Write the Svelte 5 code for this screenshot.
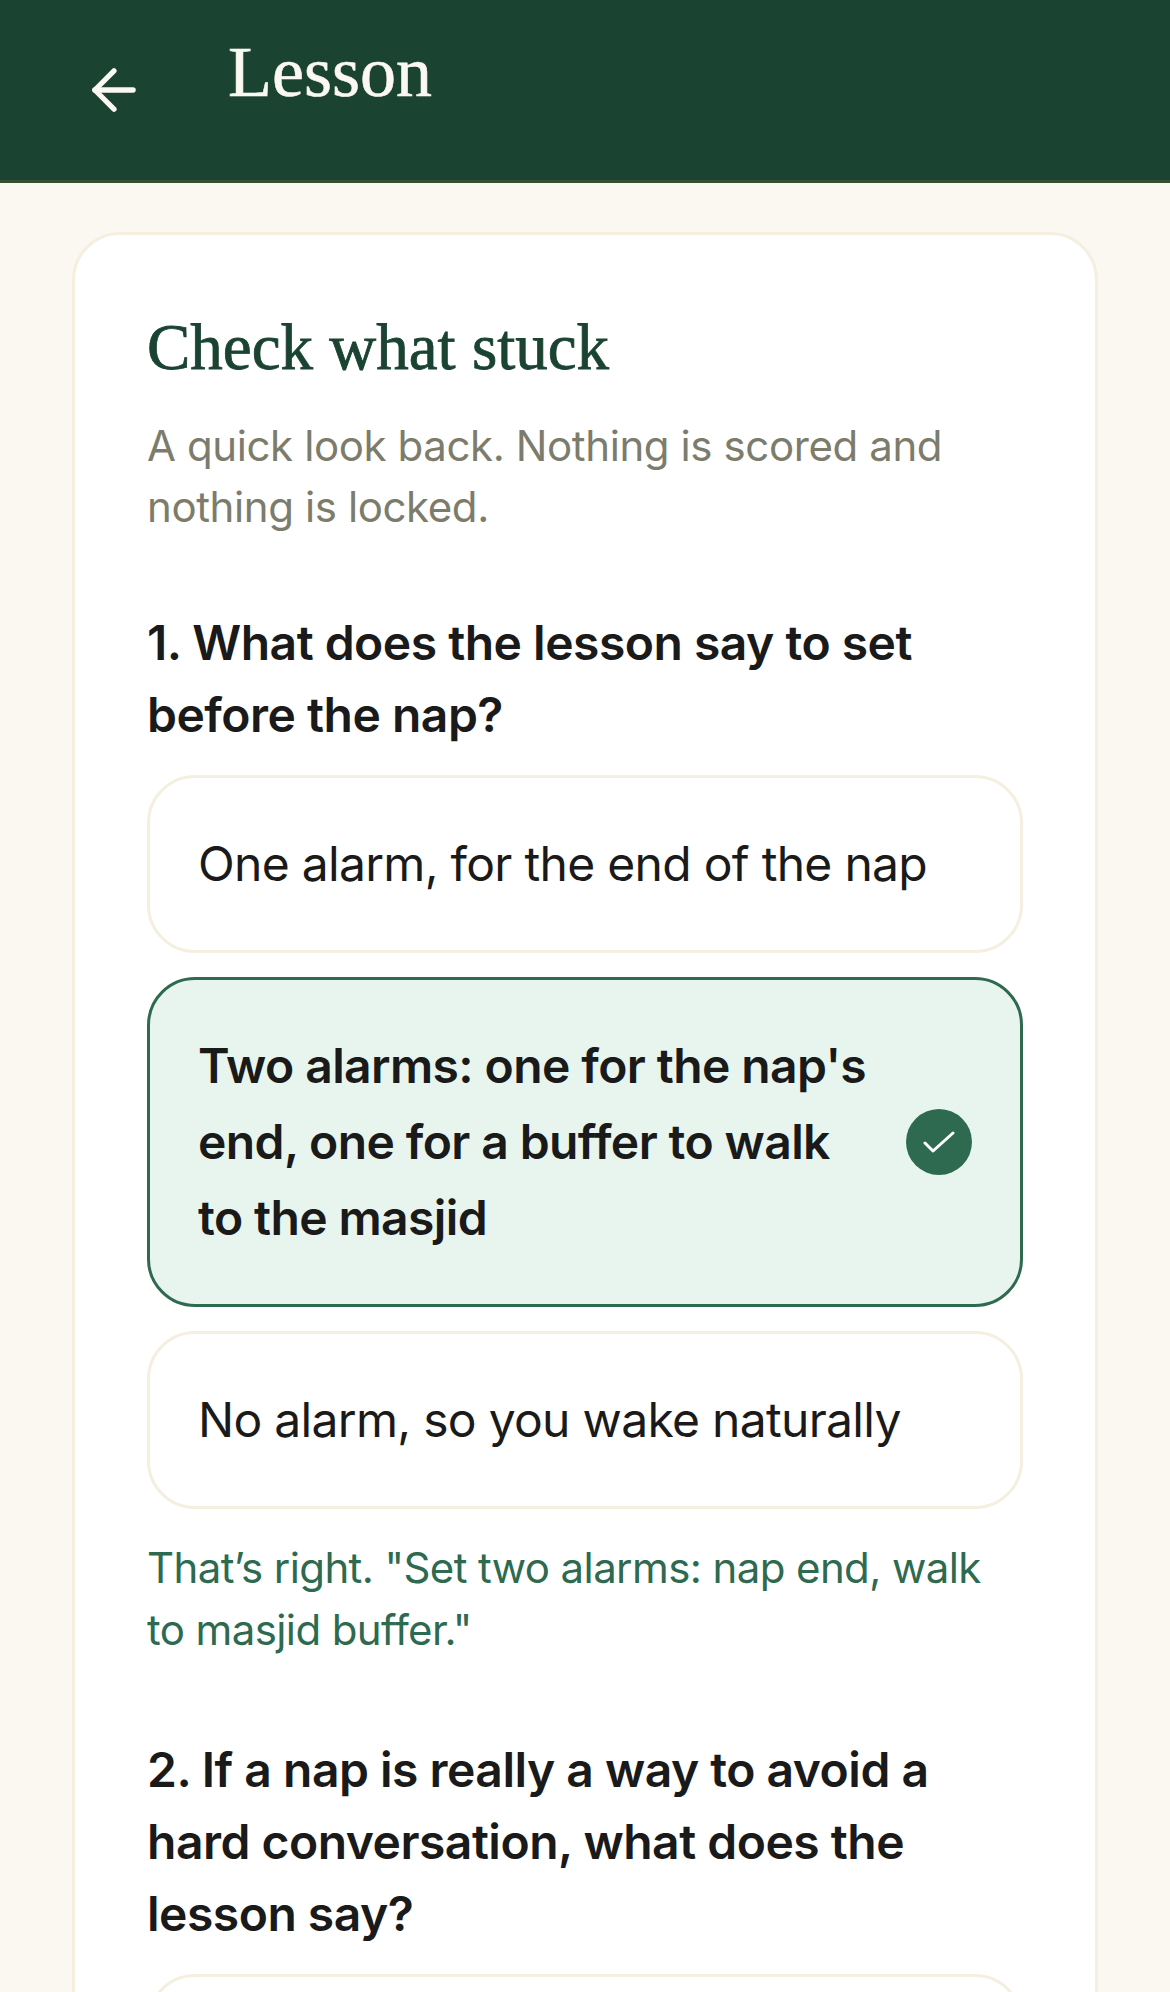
<script>
  const options = [
    { text: 'One alarm, for the end of the nap' },
    { text: "Two alarms: one for the nap's end, one for a buffer to walk to the masjid", correct: true },
    { text: 'No alarm, so you wake naturally' }
  ];
</script>

<div class="page">
  <header class="topbar">
    <button class="back" aria-label="Back">
      <svg viewBox="0 0 46 46" width="44" height="46" fill="none" stroke="currentColor" stroke-width="5.5" stroke-linecap="round" stroke-linejoin="round">
        <path d="M43 23H3" />
        <path d="M23 3 3 23l20 20" />
      </svg>
    </button>
    <h1>Lesson</h1>
  </header>

  <main class="content">
    <section class="card">
      <h2>Check what stuck</h2>
      <p class="intro">A quick look back. Nothing is scored and nothing is locked.</p>

      <h3 class="question first">1. What does the lesson say to set before the nap?</h3>
      <div class="options">
        {#each options as option}
          <div class="option" class:correct={option.correct}>
            <span>{option.text}</span>
            {#if option.correct}
              <span class="tick">
                <svg viewBox="0 0 32 22" width="32" height="22" fill="none" stroke="#fff" stroke-width="3" stroke-linecap="round" stroke-linejoin="round">
                  <path d="M2 12l8 8L30 2" />
                </svg>
              </span>
            {/if}
          </div>
        {/each}
      </div>
      <p class="feedback">That’s right. "Set two alarms: nap end, walk to masjid buffer."</p>

      <h3 class="question">2. If a nap is really a way to avoid a hard conversation, what does the lesson say?</h3>
      <div class="options">
        <div class="option"></div>
      </div>
    </section>
  </main>
</div>

<style>
  :global(body) {
    background: #faf8f1;
  }

  .page {
    height: 1992px;
    overflow: hidden;
    background: #faf8f1;
    font-family: 'Inter', 'Liberation Sans', sans-serif;
    color: #1a1a1a;
  }

  .topbar {
    display: flex;
    align-items: flex-start;
    gap: 92px;
    height: 180px;
    padding-left: 92px;
    background: #1b4332;
    border-bottom: 3px solid #35502f;
    color: #faf8f1;
  }

  .back {
    display: flex;
    margin-top: 67px;
    padding: 0;
    background: none;
    border: 0;
    color: inherit;
  }

  h1 {
    margin: 27px 0 0;
    font-family: 'Liberation Serif', serif;
    font-size: 72px;
    font-weight: 400;
    line-height: 90px;
    -webkit-text-stroke: 0.6px currentColor;
  }

  .content {
    padding: 49px 72px 0 72px;
  }

  .card {
    padding: 72px;
    background: #fff;
    border: 3px solid #f5efdf;
    border-radius: 48px;
  }

  h2 {
    margin: 0;
    font-family: 'Liberation Serif', serif;
    font-size: 65px;
    font-weight: 400;
    line-height: 80px;
    color: #1b4332;
    -webkit-text-stroke: 0.8px currentColor;
  }

  .intro {
    margin: 28px 0 0;
    font-size: 42px;
    line-height: 61px;
    letter-spacing: -0.4px;
    color: #7c7c6c;
  }

  .question {
    margin: 73px 0 24px;
    font-size: 48px;
    font-weight: 600;
    line-height: 72px;
    letter-spacing: -0.5px;
  }

  .question.first {
    margin-top: 70px;
  }

  .options {
    display: flex;
    flex-direction: column;
    gap: 24px;
  }

  .option {
    display: flex;
    align-items: center;
    justify-content: space-between;
    gap: 36px;
    min-height: 76px;
    padding: 48px;
    background: #fff;
    border: 3px solid #f5efdf;
    border-radius: 48px;
    font-size: 48px;
    line-height: 76px;
    letter-spacing: -0.7px;
  }

  .option.correct {
    background: #e8f5ee;
    border-color: #2d6a4f;
    font-weight: 600;
    letter-spacing: -0.6px;
  }

  .tick {
    display: flex;
    flex: none;
    align-items: center;
    justify-content: center;
    width: 66px;
    height: 66px;
    background: #2d6a4f;
    border-radius: 50%;
  }

  .feedback {
    max-width: 860px;
    margin: 28px 0 0;
    font-size: 42px;
    line-height: 62px;
    letter-spacing: -0.6px;
    color: #2d6a4f;
  }
</style>
